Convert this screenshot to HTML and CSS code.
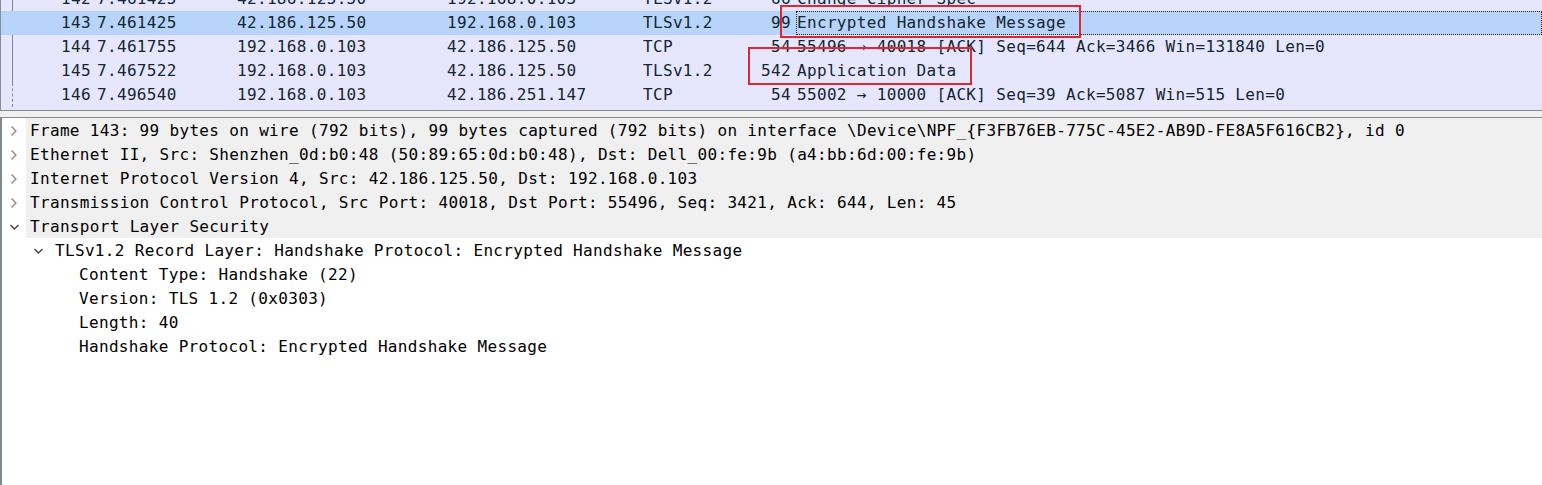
FILE: index.html
```html
<!DOCTYPE html>
<html>
<head>
<meta charset="utf-8">
<link rel="stylesheet" href="styles.css">
</head>
<body>
<div class="app">
  <div class="plist">
    <div class="rows">
      <div class="row">
        <span class="rel"></span><span class="c-no">142</span><span class="c-time">7.461425</span><span class="c-src">42.186.125.50</span><span class="c-dst">192.168.0.103</span><span class="c-proto">TLSv1.2</span><span class="c-len">66</span><span class="c-info">Change Cipher Spec</span>
      </div>
      <div class="row sel">
        <span class="rel none"></span><span class="c-no">143</span><span class="c-time">7.461425</span><span class="c-src">42.186.125.50</span><span class="c-dst">192.168.0.103</span><span class="c-proto">TLSv1.2</span><span class="c-len">99</span><span class="c-info focus">Encrypted Handshake Message</span>
      </div>
      <div class="row">
        <span class="rel"></span><span class="c-no">144</span><span class="c-time">7.461755</span><span class="c-src">192.168.0.103</span><span class="c-dst">42.186.125.50</span><span class="c-proto">TCP</span><span class="c-len">54</span><span class="c-info">55496 → 40018 [ACK] Seq=644 Ack=3466 Win=131840 Len=0</span>
      </div>
      <div class="row">
        <span class="rel"></span><span class="c-no">145</span><span class="c-time">7.467522</span><span class="c-src">192.168.0.103</span><span class="c-dst">42.186.125.50</span><span class="c-proto">TLSv1.2</span><span class="c-len">542</span><span class="c-info">Application Data</span>
      </div>
      <div class="row">
        <span class="rel dashed"></span><span class="c-no">146</span><span class="c-time">7.496540</span><span class="c-src">192.168.0.103</span><span class="c-dst">42.186.251.147</span><span class="c-proto">TCP</span><span class="c-len">54</span><span class="c-info">55002 → 10000 [ACK] Seq=39 Ack=5087 Win=515 Len=0</span>
      </div>
    </div>
  </div>
  <div class="splitter"></div>
  <div class="details">
    <div class="trow top">
      <span class="tw"><svg width="8" height="12" viewBox="0 0 8 12"><polyline points="1.5,1.5 6,6 1.5,10.5" fill="none" stroke="#8a8a8a" stroke-width="1.3"/></svg></span>
      <span class="tt">Frame 143: 99 bytes on wire (792 bits), 99 bytes captured (792 bits) on interface \Device\NPF_{F3FB76EB-775C-45E2-AB9D-FE8A5F616CB2}, id 0</span>
    </div>
    <div class="trow top">
      <span class="tw"><svg width="8" height="12" viewBox="0 0 8 12"><polyline points="1.5,1.5 6,6 1.5,10.5" fill="none" stroke="#8a8a8a" stroke-width="1.3"/></svg></span>
      <span class="tt">Ethernet II, Src: Shenzhen_0d:b0:48 (50:89:65:0d:b0:48), Dst: Dell_00:fe:9b (a4:bb:6d:00:fe:9b)</span>
    </div>
    <div class="trow top">
      <span class="tw"><svg width="8" height="12" viewBox="0 0 8 12"><polyline points="1.5,1.5 6,6 1.5,10.5" fill="none" stroke="#8a8a8a" stroke-width="1.3"/></svg></span>
      <span class="tt">Internet Protocol Version 4, Src: 42.186.125.50, Dst: 192.168.0.103</span>
    </div>
    <div class="trow top">
      <span class="tw"><svg width="8" height="12" viewBox="0 0 8 12"><polyline points="1.5,1.5 6,6 1.5,10.5" fill="none" stroke="#8a8a8a" stroke-width="1.3"/></svg></span>
      <span class="tt">Transmission Control Protocol, Src Port: 40018, Dst Port: 55496, Seq: 3421, Ack: 644, Len: 45</span>
    </div>
    <div class="trow top">
      <span class="tw"><svg width="11" height="8" viewBox="0 0 11 8"><polyline points="1.5,2 5.5,6 9.5,2" fill="none" stroke="#444" stroke-width="1.4"/></svg></span>
      <span class="tt">Transport Layer Security</span>
    </div>
    <div class="trow lvl2">
      <span class="tw"><svg width="11" height="8" viewBox="0 0 11 8"><polyline points="1.5,2 5.5,6 9.5,2" fill="none" stroke="#444" stroke-width="1.4"/></svg></span>
      <span class="tt">TLSv1.2 Record Layer: Handshake Protocol: Encrypted Handshake Message</span>
    </div>
    <div class="trow lvl3"><span class="tt">Content Type: Handshake (22)</span></div>
    <div class="trow lvl3"><span class="tt">Version: TLS 1.2 (0x0303)</span></div>
    <div class="trow lvl3"><span class="tt">Length: 40</span></div>
    <div class="trow lvl3"><span class="tt">Handshake Protocol: Encrypted Handshake Message</span></div>
  </div>
  <div class="mark mark-1"></div>
  <div class="mark mark-2"></div>
</div>
</body>
</html>
```

FILE: styles.css
```css
html, body {
  margin: 0;
  padding: 0;
  background: #ffffff;
}

.app {
  position: relative;
  width: 1542px;
  height: 485px;
  display: flex;
  flex-direction: column;
  overflow: hidden;
  font-family: "DejaVu Sans Mono", "Liberation Mono", monospace;
  font-size: 16px;
  letter-spacing: 0.33px;
  color: #12272e;
}

/* ---------- packet list ---------- */
.plist {
  height: 110px;
  background: #e7e6ff;
  border-left: 1px solid #8c8c8c;
  border-bottom: 1px solid #8a8a8a;
  overflow: hidden;
  flex: none;
}

.rows {
  margin-top: -13px;
}

.row {
  display: flex;
  height: 24px;
  line-height: 24px;
  white-space: nowrap;
}

.row.sel {
  background: #b9d4fb;
}

.rel {
  width: 11px;
  flex: none;
  border-right: 1px solid #8a8a8a;
}

.rel.dashed {
  border-right-style: dashed;
}

.rel.none {
  border-right-color: transparent;
}

.c-no {
  width: 78px;
  flex: none;
  text-align: right;
}

.c-time {
  width: 140px;
  margin-left: 6px;
  flex: none;
}

.c-src {
  width: 210px;
  flex: none;
}

.c-dst {
  width: 196px;
  flex: none;
}

.c-proto {
  width: 100px;
  flex: none;
}

.c-len {
  width: 48px;
  flex: none;
  text-align: right;
}

.c-info {
  flex: 1;
  padding-left: 6px;
}

.c-info.focus {
  outline: 1px dotted #222;
  outline-offset: -1px;
  margin-left: 5px;
  padding-left: 1px;
}

/* ---------- splitter ---------- */
.splitter {
  height: 6px;
  background: #f0f0f0;
  flex: none;
}

/* ---------- packet details ---------- */
.details {
  flex: 1;
  background: #ffffff;
  border-top: 1px solid #8a8a8a;
  border-left: 2px solid #7f8790;
  color: #000000;
}

.trow {
  display: flex;
  height: 24px;
  white-space: nowrap;
}

.tt {
  line-height: 22px;
  padding-top: 2px;
}

.tw {
  width: 24px;
  flex: none;
  display: flex;
  align-items: center;
  justify-content: center;
  padding-top: 1px;
}

.trow.top .tt {
  flex: 1;
  background: #f0f0f0;
  padding-left: 4px;
}

.trow.lvl2 {
  padding-left: 24px;
}

.trow.lvl2 .tt {
  padding-left: 5px;
}

.trow.lvl3 .tt {
  padding-left: 77px;
}

/* ---------- annotation boxes ---------- */
.mark {
  position: absolute;
  border: 2px solid #e3262e;
  box-sizing: border-box;
}

.mark-1 {
  left: 780px;
  top: 5px;
  width: 301px;
  height: 33px;
}

.mark-2 {
  left: 748px;
  top: 47px;
  width: 224px;
  height: 38px;
}
```
